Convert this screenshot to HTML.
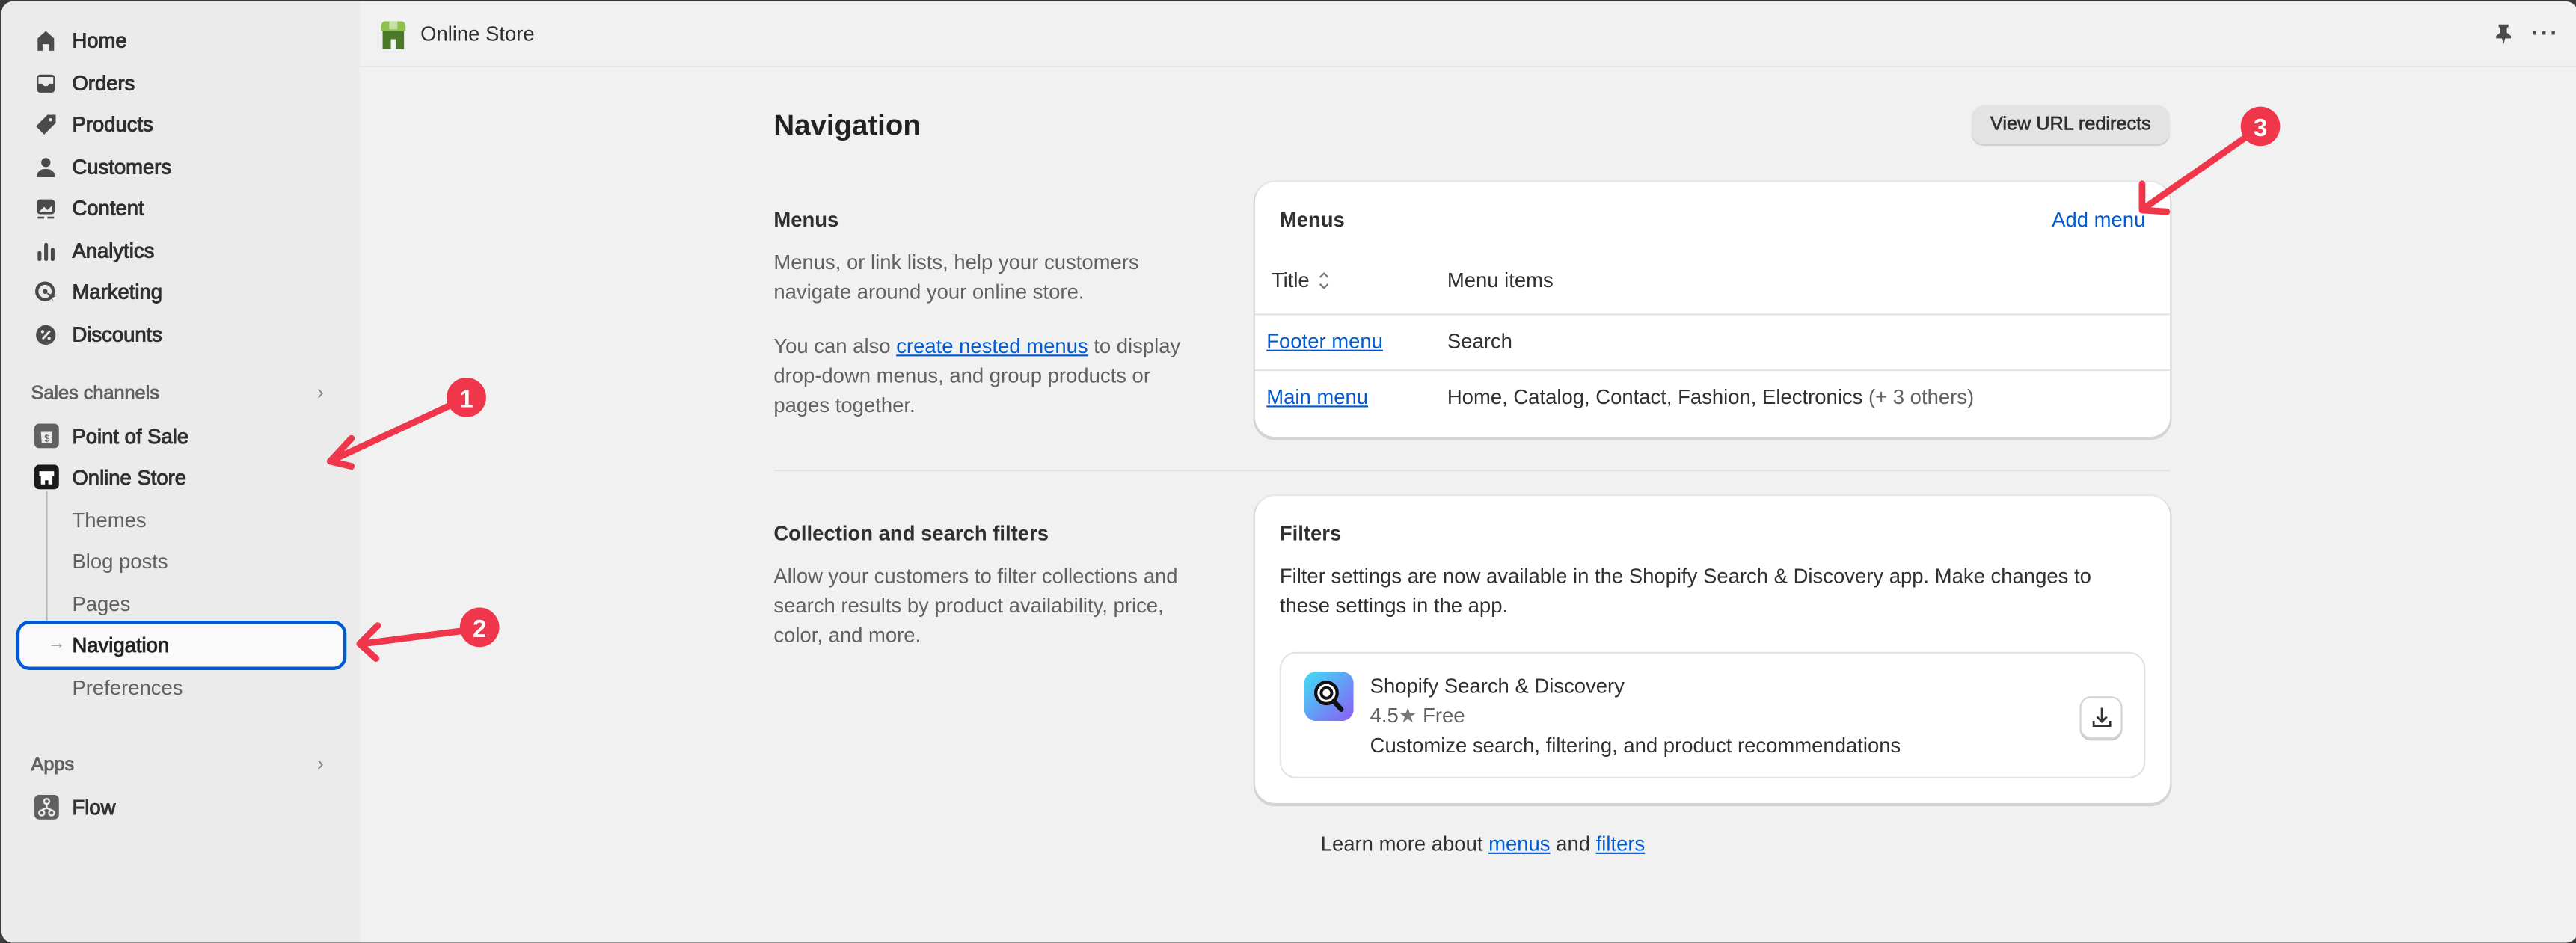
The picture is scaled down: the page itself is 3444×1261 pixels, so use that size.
<!DOCTYPE html>
<html><head><meta charset="utf-8"><style>
*{box-sizing:border-box;margin:0;padding:0}
html,body{width:3444px;height:1258px;overflow:hidden;background:#3a3a3a}
#s{position:absolute;left:0;top:0;width:1568px;height:573px;transform:translate(2px,2px) scale(2.19643);transform-origin:0 0;font-family:"Liberation Sans",sans-serif;font-size:12.5px;color:#303030;background:#f1f1f1;border-radius:7px;overflow:hidden}
.a{position:absolute;white-space:nowrap;line-height:18px}
.sb{position:absolute;left:0;top:0;width:218px;height:573px;background:#ebebeb}
.ni{font-weight:400;color:#303030;-webkit-text-stroke:0.45px #303030}
.sub{color:#616161;font-weight:400}
.ic{position:absolute;width:14px;height:14px}
.g{color:#616161}
.lk{color:#005bd3;text-decoration:underline}
.card{position:absolute;background:#fff;border-radius:12px;box-shadow:0 1px 0 1px #d4d4d4,0 0 0 1px #e8e8e8}
.b{font-weight:700}
</style></head><body><div id="s">
<div class="sb"></div>
<div style="position:absolute;left:218px;top:0;right:0;height:40px;border-bottom:1px solid #e6e6e6"></div>
<svg class="ic" style="left:230px;top:12px;width:17px;height:17px" viewBox="0 0 17 17"><rect x="2" y="5" width="13" height="12" fill="#4a7a2a"/><rect x="7" y="11" width="3" height="6" fill="#f1f1f1"/><path d="M1 4Q1 0 4 0H13Q16 0 16 4V6H1Z" fill="#8bc34a"/><rect x="6" y="0" width="5" height="5" fill="#c5e1a5"/></svg>
<div class="a" style="left:255px;top:11px;font-size:12.5px">Online Store</div>
<svg class="ic" style="left:1516px;top:13px" viewBox="0 0 14 14"><path d="M4 1h6v1.5l-1 .5v3l2.5 2v1.5H8L7 13 6 9.5H2.5V8L5 6V3L4 2.5Z" fill="#4a4a4a"/></svg>
<div class="a" style="left:1540px;top:10px;font-size:14px;font-weight:700;letter-spacing:1px;color:#4a4a4a">···</div>
<svg class="ic" style="left:20px;top:17px" viewBox="0 0 14 14"><path d="M7 1L12 5.5V13H9V9H5V13H2V5.5Z" fill="#4a4a4a"/></svg>
<div class="a ni" style="left:43px;top:15px">Home</div>
<svg class="ic" style="left:20px;top:43px" viewBox="0 0 14 14"><rect x="1.5" y="1.5" width="11" height="11" rx="2" fill="#4a4a4a"/><path d="M2.5 7H5L6 8.5H8L9 7H11.5V3H2.5Z" fill="#ebebeb"/></svg>
<div class="a ni" style="left:43px;top:41px">Orders</div>
<svg class="ic" style="left:20px;top:68px" viewBox="0 0 14 14"><path d="M8 1H13V6L6 13L1 8Z" fill="#4a4a4a"/><circle cx="10" cy="4" r="1" fill="#ebebeb"/></svg>
<div class="a ni" style="left:43px;top:66px">Products</div>
<svg class="ic" style="left:20px;top:94px" viewBox="0 0 14 14"><circle cx="7" cy="4" r="2.8" fill="#4a4a4a"/><path d="M1.5 13Q1.5 8 7 8Q12.5 8 12.5 13Z" fill="#4a4a4a"/></svg>
<div class="a ni" style="left:43px;top:92px">Customers</div>
<svg class="ic" style="left:20px;top:119px" viewBox="0 0 14 14"><rect x="1.5" y="1.5" width="11" height="9" rx="2" fill="#4a4a4a"/><path d="M3 9L6 6L8 8L11 5V9Z" fill="#ebebeb"/><rect x="2" y="12" width="4" height="1.2" fill="#4a4a4a"/><rect x="8" y="12" width="4" height="1.2" fill="#4a4a4a"/></svg>
<div class="a ni" style="left:43px;top:117px">Content</div>
<svg class="ic" style="left:20px;top:145px" viewBox="0 0 14 14"><rect x="2" y="7" width="2.3" height="6" rx="1" fill="#4a4a4a"/><rect x="6" y="2" width="2.3" height="11" rx="1" fill="#4a4a4a"/><rect x="10" y="5" width="2.3" height="8" rx="1" fill="#4a4a4a"/></svg>
<div class="a ni" style="left:43px;top:143px">Analytics</div>
<svg class="ic" style="left:20px;top:170px" viewBox="0 0 14 14"><circle cx="6.5" cy="6.5" r="5" fill="none" stroke="#4a4a4a" stroke-width="2"/><circle cx="6.5" cy="6.5" r="1.5" fill="#4a4a4a"/><path d="M7 7L13 9.5L10.5 10.5L12 13Z" fill="#4a4a4a"/></svg>
<div class="a ni" style="left:43px;top:168px">Marketing</div>
<svg class="ic" style="left:20px;top:196px" viewBox="0 0 14 14"><circle cx="7" cy="7" r="6" fill="#4a4a4a"/><path d="M5 9.5L9.5 4.5" stroke="#ebebeb" stroke-width="1.3"/><circle cx="5" cy="5" r="1" fill="#ebebeb"/><circle cx="9" cy="9" r="1" fill="#ebebeb"/></svg>
<div class="a ni" style="left:43px;top:194px">Discounts</div>
<div class="a" style="left:18px;top:230px;font-size:11.5px;font-weight:400;-webkit-text-stroke:0.4px #616161;color:#616161">Sales channels</div>
<div class="a" style="left:192px;top:229px;color:#888">›</div>
<svg class="ic" style="left:20px;top:257px;width:15px;height:15px" viewBox="0 0 15 15"><rect width="15" height="15" rx="3" fill="#616161"/><path d="M4 5H11L10.5 12H4.5Z" fill="#ebebeb"/><text x="6" y="11" font-size="6" fill="#616161" font-family="Liberation Sans">$</text></svg>
<div class="a ni" style="left:43px;top:256px">Point of Sale</div>
<svg class="ic" style="left:20px;top:282px;width:15px;height:15px" viewBox="0 0 15 15"><rect width="15" height="15" rx="3" fill="#1a1a1a"/><path d="M3 4H12V7H3Z" fill="#fff"/><path d="M4 7H11V12H8.5V9.5H6.5V12H4Z" fill="#fff"/></svg>
<div class="a ni" style="left:43px;top:281px">Online Store</div>
<div style="position:absolute;left:27px;top:298px;width:1px;height:96px;background:#b5b5b5"></div>
<div style="position:absolute;left:9px;top:377px;width:201px;height:30px;border:2px solid #005bd3;border-radius:8px;background:#fafafa"></div>
<div class="a" style="left:28px;top:382px;color:#aaa;font-size:11px">→</div>
<div class="a sub" style="left:43px;top:307px">Themes</div>
<div class="a sub" style="left:43px;top:332px">Blog posts</div>
<div class="a sub" style="left:43px;top:358px">Pages</div>
<div class="a ni" style="left:43px;top:383px;color:#1a1a1a">Navigation</div>
<div class="a sub" style="left:43px;top:409px">Preferences</div>
<div class="a" style="left:18px;top:456px;font-size:11.5px;-webkit-text-stroke:0.4px #616161;color:#616161">Apps</div>
<div class="a" style="left:192px;top:455px;color:#888">›</div>
<svg class="ic" style="left:20px;top:483px;width:15px;height:15px" viewBox="0 0 15 15"><rect width="15" height="15" rx="3" fill="#616161"/><g fill="none" stroke="#ebebeb" stroke-width="1.1"><circle cx="7.5" cy="4" r="1.6"/><circle cx="4.5" cy="11" r="1.6"/><circle cx="10.5" cy="11" r="1.6"/><path d="M7.5 5.6V8L4.5 9.4M7.5 8L10.5 9.4"/></g></svg>
<div class="a ni" style="left:43px;top:482px">Flow</div>
<div class="a b" style="left:470px;top:65px;font-size:17.5px;line-height:20px;color:#222">Navigation</div>
<div style="position:absolute;left:1199px;top:63px;width:121px;height:25px;background:#e3e3e3;border-radius:8px;box-shadow:inset 0 -1px 0 #d0d0d0;font-size:11.5px;-webkit-text-stroke:0.3px #303030;text-align:center;line-height:25px">View URL redirects</div>
<div class="a b" style="left:470px;top:124px">Menus</div>
<div class="a g" style="left:470px;top:150px">Menus, or link lists, help your customers</div>
<div class="a g" style="left:470px;top:168px">navigate around your online store.</div>
<div class="a g" style="left:470px;top:201px">You can also <span class="lk">create nested menus</span> to display</div>
<div class="a g" style="left:470px;top:219px">drop-down menus, and group products or</div>
<div class="a g" style="left:470px;top:237px">pages together.</div>
<div class="card" style="left:763px;top:110px;width:557px;height:155px">
 <div class="a b" style="left:15px;top:14px">Menus</div>
 <div class="a" style="right:15px;top:14px;color:#005bd3">Add menu</div>
 <div class="a" style="left:10px;top:51px">Title</div>
 <svg style="position:absolute;left:38px;top:54px" width="8" height="12" viewBox="0 0 8 12"><path d="M1.5 4L4 1.5L6.5 4M1.5 8L4 10.5L6.5 8" fill="none" stroke="#777" stroke-width="1"/></svg>
 <div class="a" style="left:117px;top:51px">Menu items</div>
 <div style="position:absolute;left:0;right:0;top:80px;height:1px;background:#e3e3e3"></div>
 <div class="a lk" style="left:7px;top:88px">Footer menu</div>
 <div class="a" style="left:117px;top:88px">Search</div>
 <div style="position:absolute;left:0;right:0;top:114px;height:1px;background:#e3e3e3"></div>
 <div class="a lk" style="left:7px;top:122px">Main menu</div>
 <div class="a" style="left:117px;top:122px">Home, Catalog, Contact, Fashion, Electronics <span class="g">(+ 3 others)</span></div>
</div>
<div style="position:absolute;left:470px;top:285px;width:850px;height:1px;background:#e3e3e3"></div>
<div class="a b" style="left:470px;top:315px">Collection and search filters</div>
<div class="a g" style="left:470px;top:341px">Allow your customers to filter collections and</div>
<div class="a g" style="left:470px;top:359px">search results by product availability, price,</div>
<div class="a g" style="left:470px;top:377px">color, and more.</div>
<div class="card" style="left:763px;top:301px;width:557px;height:187px">
 <div class="a b" style="left:15px;top:14px">Filters</div>
 <div class="a" style="left:15px;top:40px">Filter settings are now available in the Shopify Search &amp; Discovery app. Make changes to</div>
 <div class="a" style="left:15px;top:58px">these settings in the app.</div>
 <div style="position:absolute;left:15px;top:95px;width:527px;height:77px;border:1px solid #e3e3e3;border-radius:10px">
  <svg style="position:absolute;left:14px;top:11px" width="30" height="30" viewBox="0 0 30 30"><defs><linearGradient id="gr" x1="0" y1="0" x2="1" y2="1"><stop offset="0" stop-color="#3ee0f5"/><stop offset="1" stop-color="#8b5cf6"/></linearGradient></defs><rect width="30" height="30" rx="7" fill="url(#gr)"/><circle cx="13.5" cy="13" r="6.5" fill="#fff" stroke="#111" stroke-width="2"/><circle cx="13.5" cy="13" r="3.2" fill="none" stroke="#111" stroke-width="1.8"/><path d="M18 18L22.5 23" stroke="#111" stroke-width="3" stroke-linecap="round"/></svg>
  <div class="a" style="left:54px;top:11px">Shopify Search &amp; Discovery</div>
  <div class="a g" style="left:54px;top:29px">4.5<span style="color:#777">★</span> Free</div>
  <div class="a" style="left:54px;top:47px">Customize search, filtering, and product recommendations</div>
  <div style="position:absolute;left:486px;top:26px;width:26px;height:26px;border:1px solid #d4d4d4;border-radius:7px;box-shadow:0 1px 0 #ccc;background:#fff"><svg style="position:absolute;left:6px;top:5px" width="13" height="14" viewBox="0 0 13 14"><path d="M6.5 1V9M3.5 6.5L6.5 9.5L9.5 6.5M1.5 9V12H11.5V9" fill="none" stroke="#333" stroke-width="1.3"/></svg></div>
 </div>
</div>
<div class="a" style="left:803px;top:504px">Learn more about <span class="lk">menus</span> and <span class="lk">filters</span></div>
<svg style="position:absolute;left:0;top:0" width="1568" height="573" viewBox="0 0 1568 573">
<g stroke="#f0364a" stroke-width="4" stroke-linecap="round" stroke-linejoin="round" fill="none">
<path d="M275 245L202 279M213 266L200 280L213 283"/>
<path d="M282 383L220 391M229 380L218 391L228 400"/>
<path d="M1367 82L1304 126M1303 111L1303 127L1318 128"/>
</g>
<g fill="#f0364a"><circle cx="283" cy="241" r="12"/><circle cx="291" cy="381" r="12"/><circle cx="1375" cy="76" r="12"/></g>
<g fill="#fff" font-family="Liberation Sans" font-weight="700" font-size="15" text-anchor="middle"><text x="283" y="247">1</text><text x="291" y="387">2</text><text x="1375" y="82">3</text></g>
</svg>
</div></body></html>
